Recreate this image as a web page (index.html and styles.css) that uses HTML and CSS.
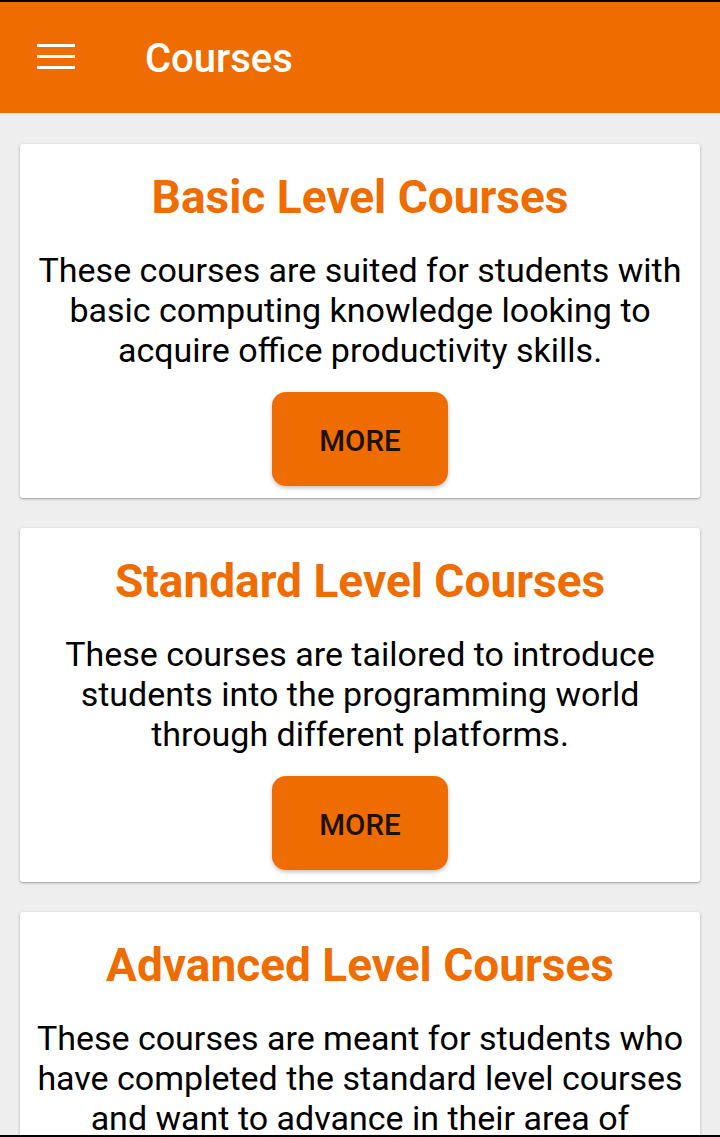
FILE: index.html
```html
<!DOCTYPE html>
<html>
<head>
<meta charset="utf-8">
<link rel="stylesheet" href="styles.css">
</head>
<body>
<div class="screen">
  <header class="appbar">
    <svg class="menu" width="38" height="25" viewBox="0 0 38 25">
      <rect x="0" y="0" width="38" height="3" fill="#fff"/>
      <rect x="0" y="11" width="38" height="3" fill="#fff"/>
      <rect x="0" y="22" width="38" height="3" fill="#fff"/>
    </svg>
    <h1 class="appbar-title">Courses</h1>
  </header>
  <main class="list">
    <section class="card">
      <h2 class="card-title">Basic Level Courses</h2>
      <p class="card-text">These courses are suited for students with basic computing knowledge looking to acquire office productivity skills.</p>
      <button class="more">MORE</button>
    </section>
    <section class="card">
      <h2 class="card-title">Standard Level Courses</h2>
      <p class="card-text">These courses are tailored to introduce students into the programming world through different platforms.</p>
      <button class="more">MORE</button>
    </section>
    <section class="card">
      <h2 class="card-title">Advanced Level Courses</h2>
      <p class="card-text">These courses are meant for students who have completed the standard level courses and want to advance in their area of expertise.</p>
      <button class="more">MORE</button>
    </section>
  </main>
</div>
</body>
</html>
```
FILE: styles.css
```css
html, body {
  margin: 0;
  padding: 0;
}
body {
  font-family: Roboto, "Noto Sans", sans-serif;
  background: #000;
}
.screen {
  width: 720px;
  height: 1137px;
  box-sizing: border-box;
  border-top: 2px solid #000;
  border-bottom: 2px solid #000;
  background: #eeeeee;
  overflow: hidden;
}
.appbar {
  height: 111px;
  background: #ef6c00;
  display: flex;
  align-items: center;
  padding-left: 37px;
  box-sizing: border-box;
}
.menu {
  display: block;
  margin-top: -3px;
}
.appbar-title {
  margin: 0 0 0 70px;
  color: #fff;
  font-weight: 500;
  font-size: 40px;
  line-height: 1;
  margin-top: 2px;
}
.list {
  display: flex;
  flex-direction: column;
  gap: 30px;
  padding: 31px 20px;
}
.card {
  background: #fff;
  border-radius: 3px;
  box-shadow: 0 1px 3px rgba(0,0,0,0.25), 0 1px 1px rgba(0,0,0,0.12);
  padding: 20px 10px 12px;
  display: flex;
  flex-direction: column;
  align-items: center;
  text-align: center;
  height: 354px;
  box-sizing: border-box;
}
.card-title {
  margin: 0;
  color: #ef6c00;
  font-weight: 700;
  font-size: 46px;
  line-height: 66px;
}
.card-text {
  margin: 20px 0 0;
  color: #000;
  font-size: 34px;
  line-height: 40px;
}
.more {
  margin-top: 22px;
  width: 176px;
  height: 94px;
  border: none;
  border-radius: 14px;
  background: #ef6c00;
  color: #1c1208;
  font-family: Roboto, sans-serif;
  font-weight: 500;
  font-size: 29.5px;
  padding-top: 4px;
  box-shadow: 0 2px 4px rgba(0,0,0,0.25);
  flex-shrink: 0;
}
```
